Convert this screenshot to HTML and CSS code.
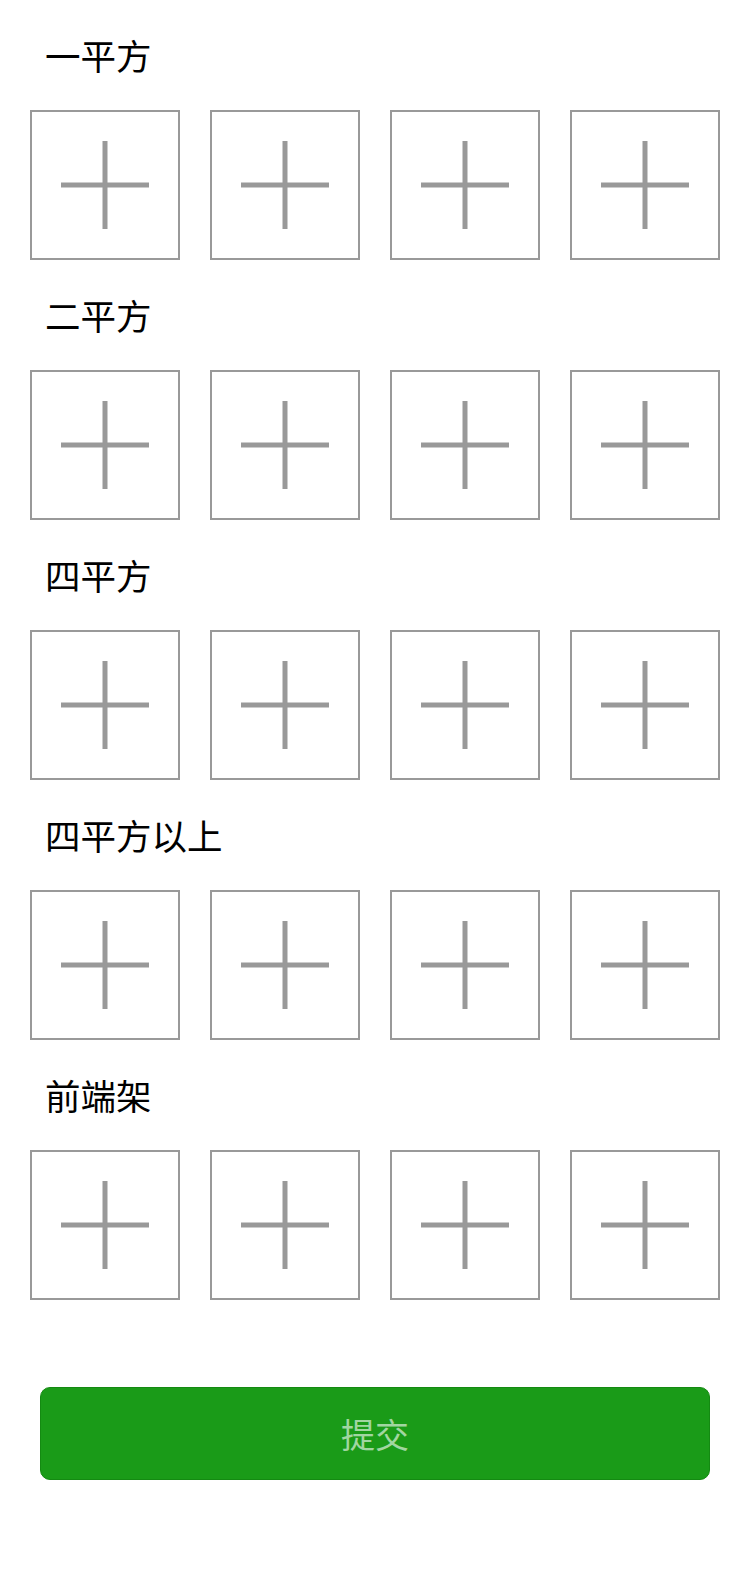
FILE: index.html
```html
<!DOCTYPE html>
<html lang="zh">
<head>
<meta charset="utf-8">
<title>上传</title>
<link rel="stylesheet" href="styles.css">
</head>
<body>
<div class="page">
  <section class="group">
    <div class="title">一平方</div>
    <div class="grid">
      <div class="box"><svg class="plus" viewBox="0 0 88 88"><path d="M0 44H88M44 0V88"/></svg></div>
      <div class="box"><svg class="plus" viewBox="0 0 88 88"><path d="M0 44H88M44 0V88"/></svg></div>
      <div class="box"><svg class="plus" viewBox="0 0 88 88"><path d="M0 44H88M44 0V88"/></svg></div>
      <div class="box"><svg class="plus" viewBox="0 0 88 88"><path d="M0 44H88M44 0V88"/></svg></div>
    </div>
  </section>
  <section class="group">
    <div class="title">二平方</div>
    <div class="grid">
      <div class="box"><svg class="plus" viewBox="0 0 88 88"><path d="M0 44H88M44 0V88"/></svg></div>
      <div class="box"><svg class="plus" viewBox="0 0 88 88"><path d="M0 44H88M44 0V88"/></svg></div>
      <div class="box"><svg class="plus" viewBox="0 0 88 88"><path d="M0 44H88M44 0V88"/></svg></div>
      <div class="box"><svg class="plus" viewBox="0 0 88 88"><path d="M0 44H88M44 0V88"/></svg></div>
    </div>
  </section>
  <section class="group">
    <div class="title">四平方</div>
    <div class="grid">
      <div class="box"><svg class="plus" viewBox="0 0 88 88"><path d="M0 44H88M44 0V88"/></svg></div>
      <div class="box"><svg class="plus" viewBox="0 0 88 88"><path d="M0 44H88M44 0V88"/></svg></div>
      <div class="box"><svg class="plus" viewBox="0 0 88 88"><path d="M0 44H88M44 0V88"/></svg></div>
      <div class="box"><svg class="plus" viewBox="0 0 88 88"><path d="M0 44H88M44 0V88"/></svg></div>
    </div>
  </section>
  <section class="group">
    <div class="title">四平方以上</div>
    <div class="grid">
      <div class="box"><svg class="plus" viewBox="0 0 88 88"><path d="M0 44H88M44 0V88"/></svg></div>
      <div class="box"><svg class="plus" viewBox="0 0 88 88"><path d="M0 44H88M44 0V88"/></svg></div>
      <div class="box"><svg class="plus" viewBox="0 0 88 88"><path d="M0 44H88M44 0V88"/></svg></div>
      <div class="box"><svg class="plus" viewBox="0 0 88 88"><path d="M0 44H88M44 0V88"/></svg></div>
    </div>
  </section>
  <section class="group">
    <div class="title">前端架</div>
    <div class="grid">
      <div class="box"><svg class="plus" viewBox="0 0 88 88"><path d="M0 44H88M44 0V88"/></svg></div>
      <div class="box"><svg class="plus" viewBox="0 0 88 88"><path d="M0 44H88M44 0V88"/></svg></div>
      <div class="box"><svg class="plus" viewBox="0 0 88 88"><path d="M0 44H88M44 0V88"/></svg></div>
      <div class="box"><svg class="plus" viewBox="0 0 88 88"><path d="M0 44H88M44 0V88"/></svg></div>
    </div>
  </section>
  <button class="submit" type="button">提交</button>
</div>
</body>
</html>
```

FILE: styles.css
```css
html, body {
  margin: 0;
  padding: 0;
  background: #ffffff;
}

body {
  font-family: "Noto Sans CJK SC", "Noto Sans", sans-serif;
  color: #000000;
}

.page {
  padding: 0 30px;
  display: flex;
  flex-direction: column;
}

.title {
  height: 110px;
  box-sizing: border-box;
  padding: 0 0 0 15px;
  display: flex;
  align-items: center;
  font-size: 35.5px;
  line-height: 1;
}

.grid {
  display: grid;
  grid-template-columns: repeat(4, 150px);
  column-gap: 30px;
}

.box {
  width: 150px;
  height: 150px;
  box-sizing: border-box;
  border: 2px solid #999999;
  display: flex;
  align-items: center;
  justify-content: center;
}

.plus {
  width: 88px;
  height: 88px;
  display: block;
}

.plus path {
  stroke: #999999;
  stroke-width: 5;
  fill: none;
}

.submit {
  margin: 87px 10px 0;
  width: 670px;
  height: 93px;
  box-sizing: border-box;
  border: 1px solid #148a12;
  border-radius: 10px;
  background: #1a9b18;
  color: rgba(255, 255, 255, 0.6);
  font-family: "Noto Sans CJK SC", "Noto Sans", sans-serif;
  font-size: 34px;
  padding: 0;
}
```
